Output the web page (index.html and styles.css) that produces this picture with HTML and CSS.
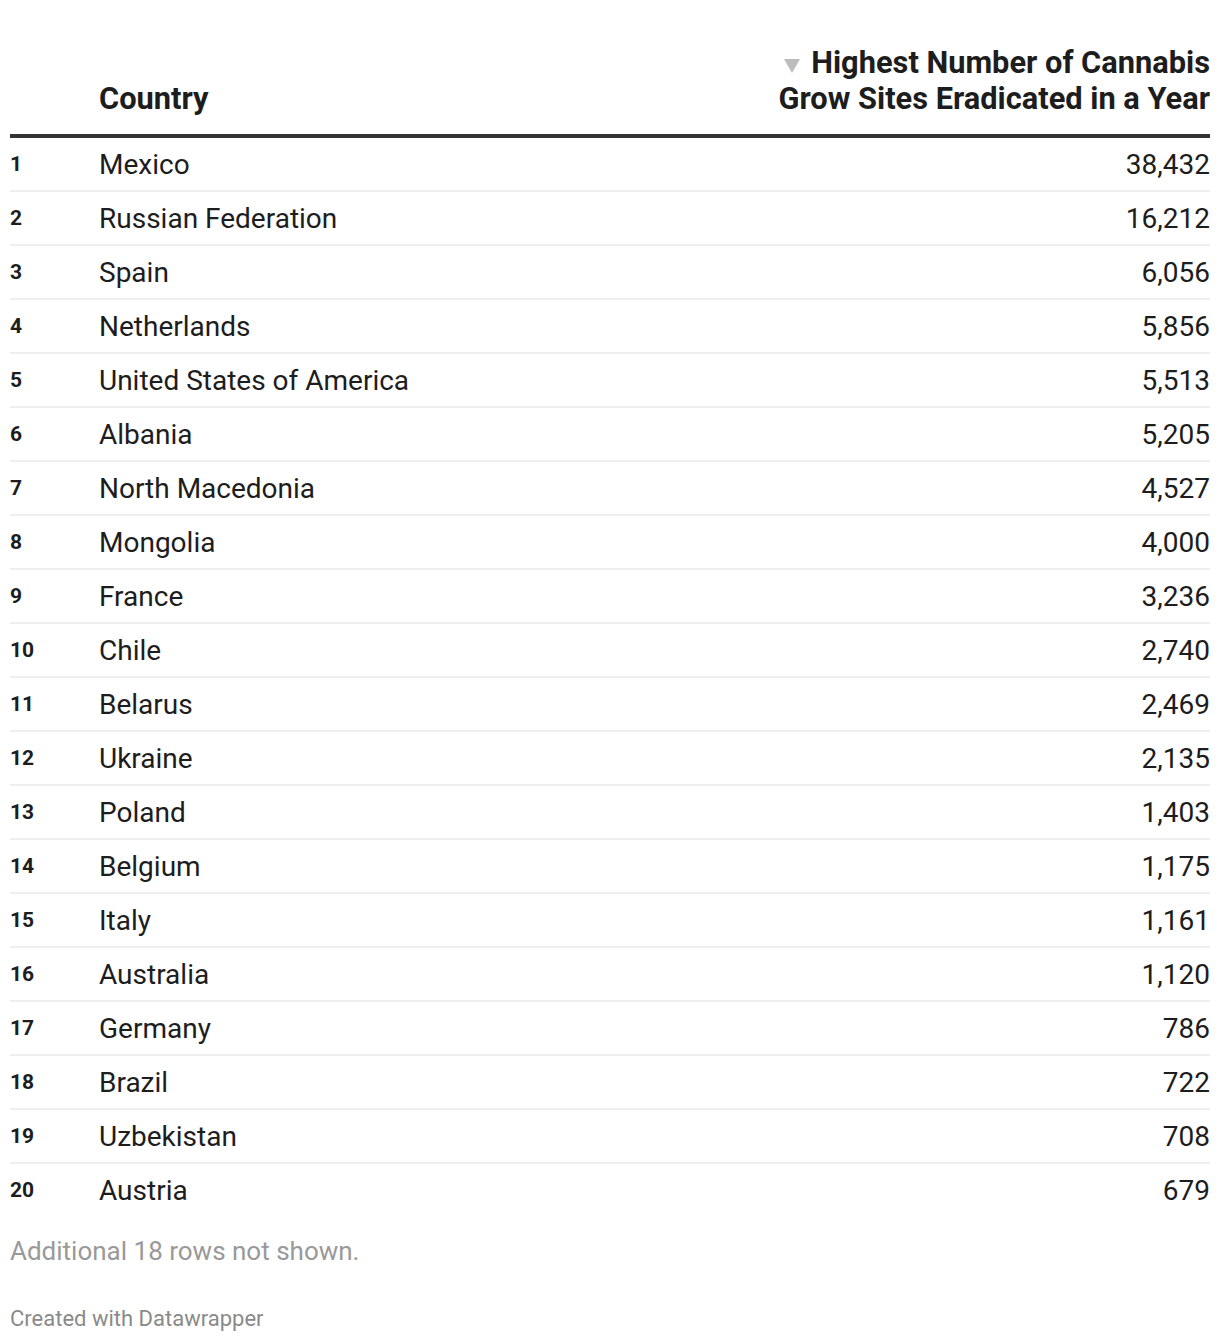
FILE: index.html
```html
<!DOCTYPE html>
<html>
<head>
<meta charset="utf-8">
<link rel="stylesheet" href="styles.css">
</head>
<body>
<div class="chart">
  <table class="tbl">
    <thead>
      <tr>
        <th class="c-rank"></th>
        <th class="c-name">Country</th>
        <th class="c-val"><svg class="sort" width="16" height="14" viewBox="0 0 16 14"><polygon points="0,0 16,0 8,14" fill="#bdbdbd"/></svg>Highest Number of Cannabis<br>Grow Sites Eradicated in a Year</th>
      </tr>
    </thead>
    <tbody>
      <tr><td class="c-rank">1</td><td class="c-name">Mexico</td><td class="c-val">38,432</td></tr>
      <tr><td class="c-rank">2</td><td class="c-name">Russian Federation</td><td class="c-val">16,212</td></tr>
      <tr><td class="c-rank">3</td><td class="c-name">Spain</td><td class="c-val">6,056</td></tr>
      <tr><td class="c-rank">4</td><td class="c-name">Netherlands</td><td class="c-val">5,856</td></tr>
      <tr><td class="c-rank">5</td><td class="c-name">United States of America</td><td class="c-val">5,513</td></tr>
      <tr><td class="c-rank">6</td><td class="c-name">Albania</td><td class="c-val">5,205</td></tr>
      <tr><td class="c-rank">7</td><td class="c-name">North Macedonia</td><td class="c-val">4,527</td></tr>
      <tr><td class="c-rank">8</td><td class="c-name">Mongolia</td><td class="c-val">4,000</td></tr>
      <tr><td class="c-rank">9</td><td class="c-name">France</td><td class="c-val">3,236</td></tr>
      <tr><td class="c-rank">10</td><td class="c-name">Chile</td><td class="c-val">2,740</td></tr>
      <tr><td class="c-rank">11</td><td class="c-name">Belarus</td><td class="c-val">2,469</td></tr>
      <tr><td class="c-rank">12</td><td class="c-name">Ukraine</td><td class="c-val">2,135</td></tr>
      <tr><td class="c-rank">13</td><td class="c-name">Poland</td><td class="c-val">1,403</td></tr>
      <tr><td class="c-rank">14</td><td class="c-name">Belgium</td><td class="c-val">1,175</td></tr>
      <tr><td class="c-rank">15</td><td class="c-name">Italy</td><td class="c-val">1,161</td></tr>
      <tr><td class="c-rank">16</td><td class="c-name">Australia</td><td class="c-val">1,120</td></tr>
      <tr><td class="c-rank">17</td><td class="c-name">Germany</td><td class="c-val">786</td></tr>
      <tr><td class="c-rank">18</td><td class="c-name">Brazil</td><td class="c-val">722</td></tr>
      <tr><td class="c-rank">19</td><td class="c-name">Uzbekistan</td><td class="c-val">708</td></tr>
      <tr class="last"><td class="c-rank">20</td><td class="c-name">Austria</td><td class="c-val">679</td></tr>
    </tbody>
  </table>
  <p class="note">Additional 18 rows not shown.</p>
  <p class="credit">Created with Datawrapper</p>
</div>
</body>
</html>
```
FILE: styles.css
```css
html, body {
  margin: 0;
  padding: 0;
  background: #ffffff;
}
body {
  font-family: Roboto, "Liberation Sans", sans-serif;
  color: #1d1d1d;
}
.chart {
  padding: 45px 10px 0 10px;
}
.tbl {
  width: 100%;
  border-collapse: collapse;
}
.tbl th {
  font-weight: 700;
  font-size: 30.8px;
  line-height: 36px;
  vertical-align: bottom;
  padding: 0 0 17px 0;
  border-bottom: 4px solid #333333;
  text-align: left;
}
.tbl th.c-val {
  text-align: right;
}
.sort {
  display: inline-block;
  vertical-align: baseline;
  margin-right: 11px;
}
.tbl td {
  height: 52px;
  padding: 0;
  font-size: 28px;
  border-bottom: 2px solid #eeeeee;
  vertical-align: middle;
}
.tbl tr.last td {
  border-bottom: none;
}
.c-rank {
  width: 89px;
}
.tbl td.c-rank {
  font-size: 21px;
  font-weight: 700;
}
.tbl td.c-val {
  text-align: right;
}
.note {
  margin: 19px 0 0 0;
  font-size: 26px;
  line-height: 32px;
  color: #999999;
}
.credit {
  margin: 38px 0 0 0;
  font-size: 22px;
  line-height: 28px;
  color: #8a8a8a;
}
```
